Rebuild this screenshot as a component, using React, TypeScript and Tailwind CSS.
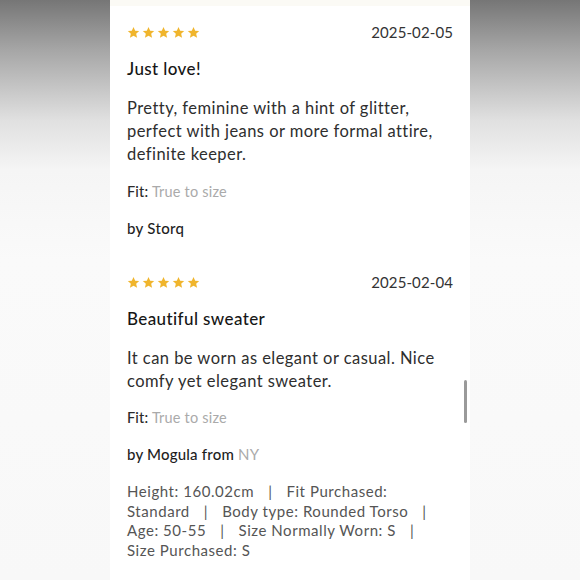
import React from "react";

const font = { fontFamily: "Lato, 'Open Sans', sans-serif" };

function Stars() {
  return (
    <div className="flex items-center gap-[2px] h-5">
      {[0, 1, 2, 3, 4].map((i) => (
        <svg key={i} width="13" height="13" viewBox="0 0 24 24" className="fill-[#f0b52d]">
          <path d="M12 1.8l3.1 7 7.4.6-5.6 4.9 1.7 7.4L12 17.8l-6.6 3.9 1.7-7.4L1.5 9.4l7.4-.6z" />
        </svg>
      ))}
    </div>
  );
}

function Sep() {
  return <span className="mx-[14px]">|</span>;
}

export default function App() {
  return (
    <div className="flex w-[580px] h-[580px] overflow-hidden" style={font}>
      <div className="w-[110px] h-full bg-[linear-gradient(180deg,#767676_0px,#a6a6a6_50px,#e0e0e0_120px,#f5f5f5_170px,#fafafa_260px,#f8f8f8_580px)]" />
      <div className="relative w-[360px] h-full bg-white flex flex-col">
        <div className="h-[6px] bg-[#fbfaf5]" />
        <div className="px-[17px] pt-[16px] flex flex-col">
          {/* review 1 */}
          <div className="flex items-center justify-between">
            <Stars />
            <span className="text-[15px] leading-5 text-[#333] tracking-[0.1px]">2025-02-05</span>
          </div>
          <h3 className="mt-[16px] text-[17px] leading-[22px] font-medium text-[#161616] tracking-[0.4px]">Just love!</h3>
          <p className="mt-[17px] text-[16.5px] leading-[23px] text-[#2e2e2e] tracking-[0.45px]">
            Pretty, feminine with a hint of glitter, perfect with jeans or more formal attire, definite keeper.
          </p>
          <p className="mt-[16px] text-[14.5px] leading-5 tracking-[0.2px]">
            <span className="text-[#2a2a2a] font-medium">Fit:</span> <span className="text-[#aaa]">True to size</span>
          </p>
          <p className="mt-[16px] text-[15px] leading-5 text-[#1e1e1e] font-medium tracking-[0.3px]">by Storq</p>

          {/* review 2 */}
          <div className="mt-[34px] flex items-center justify-between">
            <Stars />
            <span className="text-[15px] leading-5 text-[#333] tracking-[0.1px]">2025-02-04</span>
          </div>
          <h3 className="mt-[16px] text-[17px] leading-[22px] font-medium text-[#161616] tracking-[0.4px]">Beautiful sweater</h3>
          <p className="mt-[17px] text-[16.5px] leading-[23px] text-[#2e2e2e] tracking-[0.45px]">
            It can be worn as elegant or casual. Nice comfy yet elegant sweater.
          </p>
          <p className="mt-[15px] text-[14.5px] leading-5 tracking-[0.2px]">
            <span className="text-[#2a2a2a] font-medium">Fit:</span> <span className="text-[#aaa]">True to size</span>
          </p>
          <p className="mt-[16px] text-[15px] leading-5 text-[#1e1e1e] font-medium tracking-[0.2px]">
            by Mogula from <span className="text-[#aaa] font-normal">NY</span>
          </p>
          <div className="mt-[18px] text-[15px] leading-[19.7px] text-[#555] tracking-[0.55px] whitespace-nowrap">
            <div>Height: 160.02cm<Sep />Fit Purchased:</div>
            <div>Standard<Sep />Body type: Rounded Torso<Sep /></div>
            <div>Age: 50-55<Sep />Size Normally Worn: S<Sep /></div>
            <div>Size Purchased: S</div>
          </div>
        </div>
        <div className="absolute right-[3px] top-[380px] w-[3px] h-[43px] rounded-full bg-[#9a9a9a]" />
      </div>
      <div className="w-[110px] h-full bg-[linear-gradient(180deg,#767676_0px,#a6a6a6_50px,#e0e0e0_120px,#f5f5f5_170px,#fafafa_260px,#f8f8f8_580px)]" />
    </div>
  );
}
